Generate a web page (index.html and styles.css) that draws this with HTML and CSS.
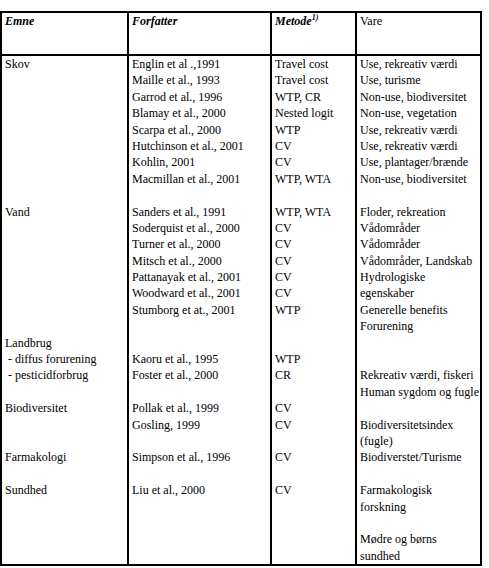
FILE: index.html
```html
<!DOCTYPE html>
<html lang="da">
<head>
<meta charset="utf-8">
<title>Tabel</title>
<link rel="stylesheet" href="styles.css">
</head>
<body>
<div class="tbl">
  <div class="cell head"><b><i>Emne</i></b></div>
  <div class="cell head"><b><i>Forfatter</i></b></div>
  <div class="cell head"><b><i>Metode<sup>1)</sup></i></b></div>
  <div class="cell head">Vare</div>

  <div class="cell body">
    <div class="l">Skov</div>
    <div class="l"></div><div class="l"></div><div class="l"></div><div class="l"></div>
    <div class="l"></div><div class="l"></div><div class="l"></div><div class="l"></div>
    <div class="l">Vand</div>
    <div class="l"></div><div class="l"></div><div class="l"></div><div class="l"></div>
    <div class="l"></div><div class="l"></div><div class="l"></div>
    <div class="l">Landbrug</div>
    <div class="l">&nbsp;- diffus forurening</div>
    <div class="l">&nbsp;- pesticidforbrug</div>
    <div class="l"></div>
    <div class="l">Biodiversitet</div>
    <div class="l"></div><div class="l"></div>
    <div class="l">Farmakologi</div>
    <div class="l"></div>
    <div class="l">Sundhed</div>
  </div>

  <div class="cell body">
    <div class="l">Englin et al .,1991</div>
    <div class="l">Maille et al., 1993</div>
    <div class="l">Garrod et al., 1996</div>
    <div class="l">Blamay et al., 2000</div>
    <div class="l">Scarpa et al., 2000</div>
    <div class="l">Hutchinson et al., 2001</div>
    <div class="l">Kohlin, 2001</div>
    <div class="l">Macmillan et al., 2001</div>
    <div class="l"></div>
    <div class="l">Sanders et al., 1991</div>
    <div class="l">Soderquist et al., 2000</div>
    <div class="l">Turner et al., 2000</div>
    <div class="l">Mitsch et al., 2000</div>
    <div class="l">Pattanayak et al., 2001</div>
    <div class="l">Woodward et al., 2001</div>
    <div class="l">Stumborg et at., 2001</div>
    <div class="l"></div><div class="l"></div>
    <div class="l">Kaoru et al., 1995</div>
    <div class="l">Foster et al., 2000</div>
    <div class="l"></div>
    <div class="l">Pollak et al., 1999</div>
    <div class="l">Gosling, 1999</div>
    <div class="l"></div>
    <div class="l">Simpson et al., 1996</div>
    <div class="l"></div>
    <div class="l">Liu et al., 2000</div>
  </div>

  <div class="cell body">
    <div class="l">Travel cost</div>
    <div class="l">Travel cost</div>
    <div class="l">WTP, CR</div>
    <div class="l">Nested logit</div>
    <div class="l">WTP</div>
    <div class="l">CV</div>
    <div class="l">CV</div>
    <div class="l">WTP, WTA</div>
    <div class="l"></div>
    <div class="l">WTP, WTA</div>
    <div class="l">CV</div>
    <div class="l">CV</div>
    <div class="l">CV</div>
    <div class="l">CV</div>
    <div class="l">CV</div>
    <div class="l">WTP</div>
    <div class="l"></div><div class="l"></div>
    <div class="l">WTP</div>
    <div class="l">CR</div>
    <div class="l"></div>
    <div class="l">CV</div>
    <div class="l">CV</div>
    <div class="l"></div>
    <div class="l">CV</div>
    <div class="l"></div>
    <div class="l">CV</div>
  </div>

  <div class="cell body">
    <div class="l">Use, rekreativ værdi</div>
    <div class="l">Use, turisme</div>
    <div class="l">Non-use, biodiversitet</div>
    <div class="l">Non-use, vegetation</div>
    <div class="l">Use, rekreativ værdi</div>
    <div class="l">Use, rekreativ værdi</div>
    <div class="l">Use, plantager/brænde</div>
    <div class="l">Non-use, biodiversitet</div>
    <div class="l"></div>
    <div class="l">Floder, rekreation</div>
    <div class="l">Vådområder</div>
    <div class="l">Vådområder</div>
    <div class="l">Vådområder, Landskab</div>
    <div class="l">Hydrologiske</div>
    <div class="l">egenskaber</div>
    <div class="l">Generelle benefits</div>
    <div class="l">Forurening</div>
    <div class="l"></div><div class="l"></div>
    <div class="l">Rekreativ værdi, fiskeri</div>
    <div class="l">Human sygdom og fugle</div>
    <div class="l"></div>
    <div class="l">Biodiversitetsindex</div>
    <div class="l">(fugle)</div>
    <div class="l">Biodiverstet/Turisme</div>
    <div class="l"></div>
    <div class="l">Farmakologisk</div>
    <div class="l">forskning</div>
    <div class="l"></div>
    <div class="l">Mødre og børns</div>
    <div class="l">sundhed</div>
  </div>
</div>
</body>
</html>
```

FILE: styles.css
```css
html, body {
  margin: 0;
  padding: 0;
  background: #fff;
}

body {
  font-family: "Liberation Serif", "Times New Roman", serif;
  font-size: 12px;
  color: #000;
}

.tbl {
  margin-top: 11px;
  width: 482px;
  box-sizing: border-box;
  display: grid;
  grid-template-columns: 125px 141px 83px 123px;
  grid-template-rows: 41px 508px;
  gap: 2px;
  padding: 2px;
  background: #000;
}

.cell {
  background: #fff;
  padding-left: 3px;
  overflow: hidden;
}

.head {
  padding-top: 1px;
  line-height: 14px;
}

.head sup {
  font-size: 8px;
  line-height: 0;
  vertical-align: 5px;
}

.body {
  padding-top: 0;
}

.l {
  height: 16.4px;
  line-height: 16.4px;
  white-space: nowrap;
}
```
